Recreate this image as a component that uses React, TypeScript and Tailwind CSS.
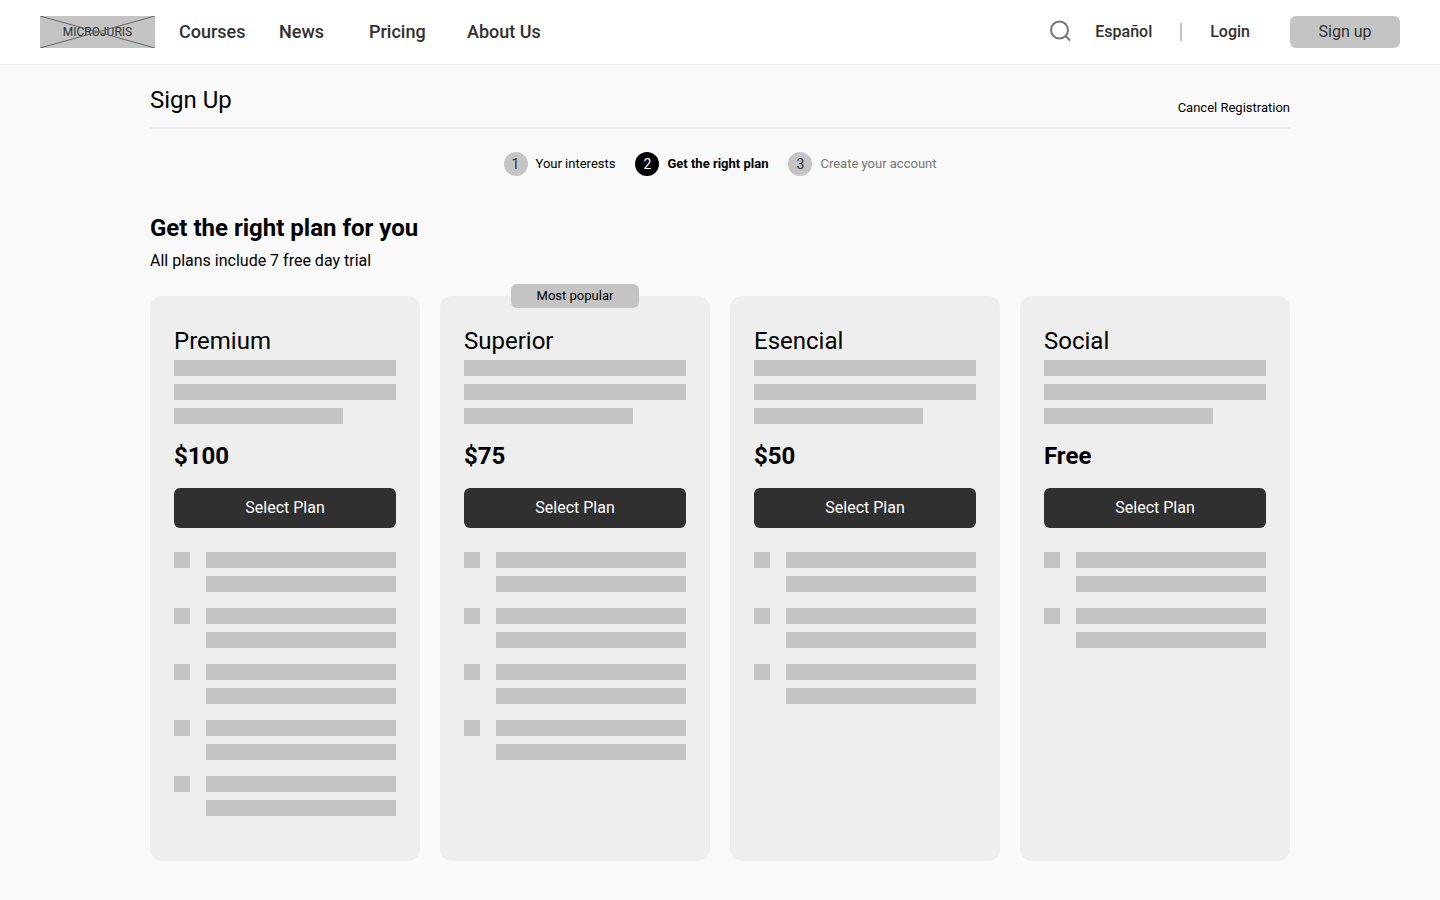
import clsx from 'clsx';

const steps = [
  { label: 'Your interests', state: 'done' },
  { label: 'Get the right plan', state: 'current' },
  { label: 'Create your account', state: 'upcoming' },
];

const plans = [
  { name: 'Premium', price: '$100', features: 5, popular: false },
  { name: 'Superior', price: '$75', features: 4, popular: true },
  { name: 'Esencial', price: '$50', features: 3, popular: false },
  { name: 'Social', price: 'Free', features: 2, popular: false },
];

function Logo() {
  return (
    <a href="#" className="relative flex h-8 w-[115px] items-center justify-center bg-[#c4c4c4] text-xs text-[#303030]">
      MICROJURIS
      <svg
        className="absolute inset-0 h-full w-full"
        viewBox="0 0 115 32"
        stroke="#666666"
        strokeWidth="1"
        aria-hidden="true"
      >
        <path d="M0 0L115 32M0 32L115 0" />
      </svg>
    </a>
  );
}

function SearchIcon() {
  return (
    <svg width="24" height="24" viewBox="0 0 24 24" fill="none" stroke="currentColor" strokeWidth="2" aria-hidden="true">
      <circle cx="10.5" cy="10" r="8.5" />
      <path d="M16.5 16L21 20.5" />
    </svg>
  );
}

function Header() {
  return (
    <header className="flex items-center justify-between border-b border-[#eeeeee] bg-white px-10 py-4 text-[#303030]">
      <div className="flex items-center gap-6">
        <Logo />
        <nav className="grid grid-cols-[100px_90px_98px_auto] text-lg leading-8 font-medium">
          <a href="#">Courses</a>
          <a href="#">News</a>
          <a href="#">Pricing</a>
          <a href="#">About Us</a>
        </nav>
      </div>
      <div className="flex items-center text-base font-medium">
        <button type="button" aria-label="Search" className="mr-[22px] text-[#757575]">
          <SearchIcon />
        </button>
        <a href="#">Español</a>
        <span className="mx-7 h-[18px] w-0.5 bg-[#c4c4c4]" />
        <a href="#">Login</a>
        <button type="button" className="ml-10 h-8 w-[110px] rounded-md bg-[#c4c4c4] font-normal">
          Sign up
        </button>
      </div>
    </header>
  );
}

function Steps() {
  return (
    <ol className="mt-[23px] flex justify-center gap-5 text-[13px] leading-6">
      {steps.map((step, i) => (
        <li key={step.label} className="flex items-center gap-2">
          <span
            className={clsx(
              'flex size-6 items-center justify-center rounded-full text-sm',
              step.state === 'current' ? 'bg-black text-white' : 'bg-[#c4c4c4] text-[#303030]',
            )}
          >
            {i + 1}
          </span>
          <span
            className={clsx(
              step.state === 'current' && 'font-bold',
              step.state === 'upcoming' && 'text-[#757575]',
            )}
          >
            {step.label}
          </span>
        </li>
      ))}
    </ol>
  );
}

function PlanCard({ plan }: { plan: (typeof plans)[number] }) {
  return (
    <article className="relative rounded-xl bg-[#eeeeee] px-6 pt-[29px] pb-[45px]">
      {plan.popular && (
        <span className="absolute -top-3 left-1/2 w-32 -translate-x-1/2 rounded-md bg-[#c4c4c4] text-center text-[13px] leading-6">
          Most popular
        </span>
      )}
      <h3 className="text-2xl leading-8">{plan.name}</h3>
      <div className="mt-[3px] space-y-2">
        <div className="h-4 bg-[#c4c4c4]" />
        <div className="h-4 bg-[#c4c4c4]" />
        <div className="h-4 w-[76%] bg-[#c4c4c4]" />
      </div>
      <p className="mt-4 text-2xl leading-8 font-bold">{plan.price}</p>
      <button type="button" className="mt-4 h-10 w-full rounded-md bg-[#303030] text-base text-white">
        Select Plan
      </button>
      <ul className="mt-6 space-y-4">
        {Array.from({ length: plan.features }, (_, i) => (
          <li key={i} className="flex gap-4">
            <div className="size-4 bg-[#c4c4c4]" />
            <div className="flex-1 space-y-2">
              <div className="h-4 bg-[#c4c4c4]" />
              <div className="h-4 bg-[#c4c4c4]" />
            </div>
          </li>
        ))}
      </ul>
    </article>
  );
}

export default function App() {
  return (
    <div className="min-h-screen bg-[#f9f9f9] font-[Roboto,sans-serif] text-black">
      <Header />
      <main className="mx-auto max-w-[1140px] pb-8">
        <div className="flex items-end justify-between border-b-2 border-[#eeeeee] pt-[19px] pb-[11px]">
          <h1 className="text-2xl leading-8">Sign Up</h1>
          <a href="#" className="text-[13px] leading-4">
            Cancel Registration
          </a>
        </div>
        <Steps />
        <h2 className="mt-9 text-2xl leading-8 font-bold">Get the right plan for you</h2>
        <p className="mt-[5px] text-base leading-6">All plans include 7 free day trial</p>
        <div className="mt-[23px] grid grid-cols-4 gap-5">
          {plans.map((plan) => (
            <PlanCard key={plan.name} plan={plan} />
          ))}
        </div>
      </main>
    </div>
  );
}
